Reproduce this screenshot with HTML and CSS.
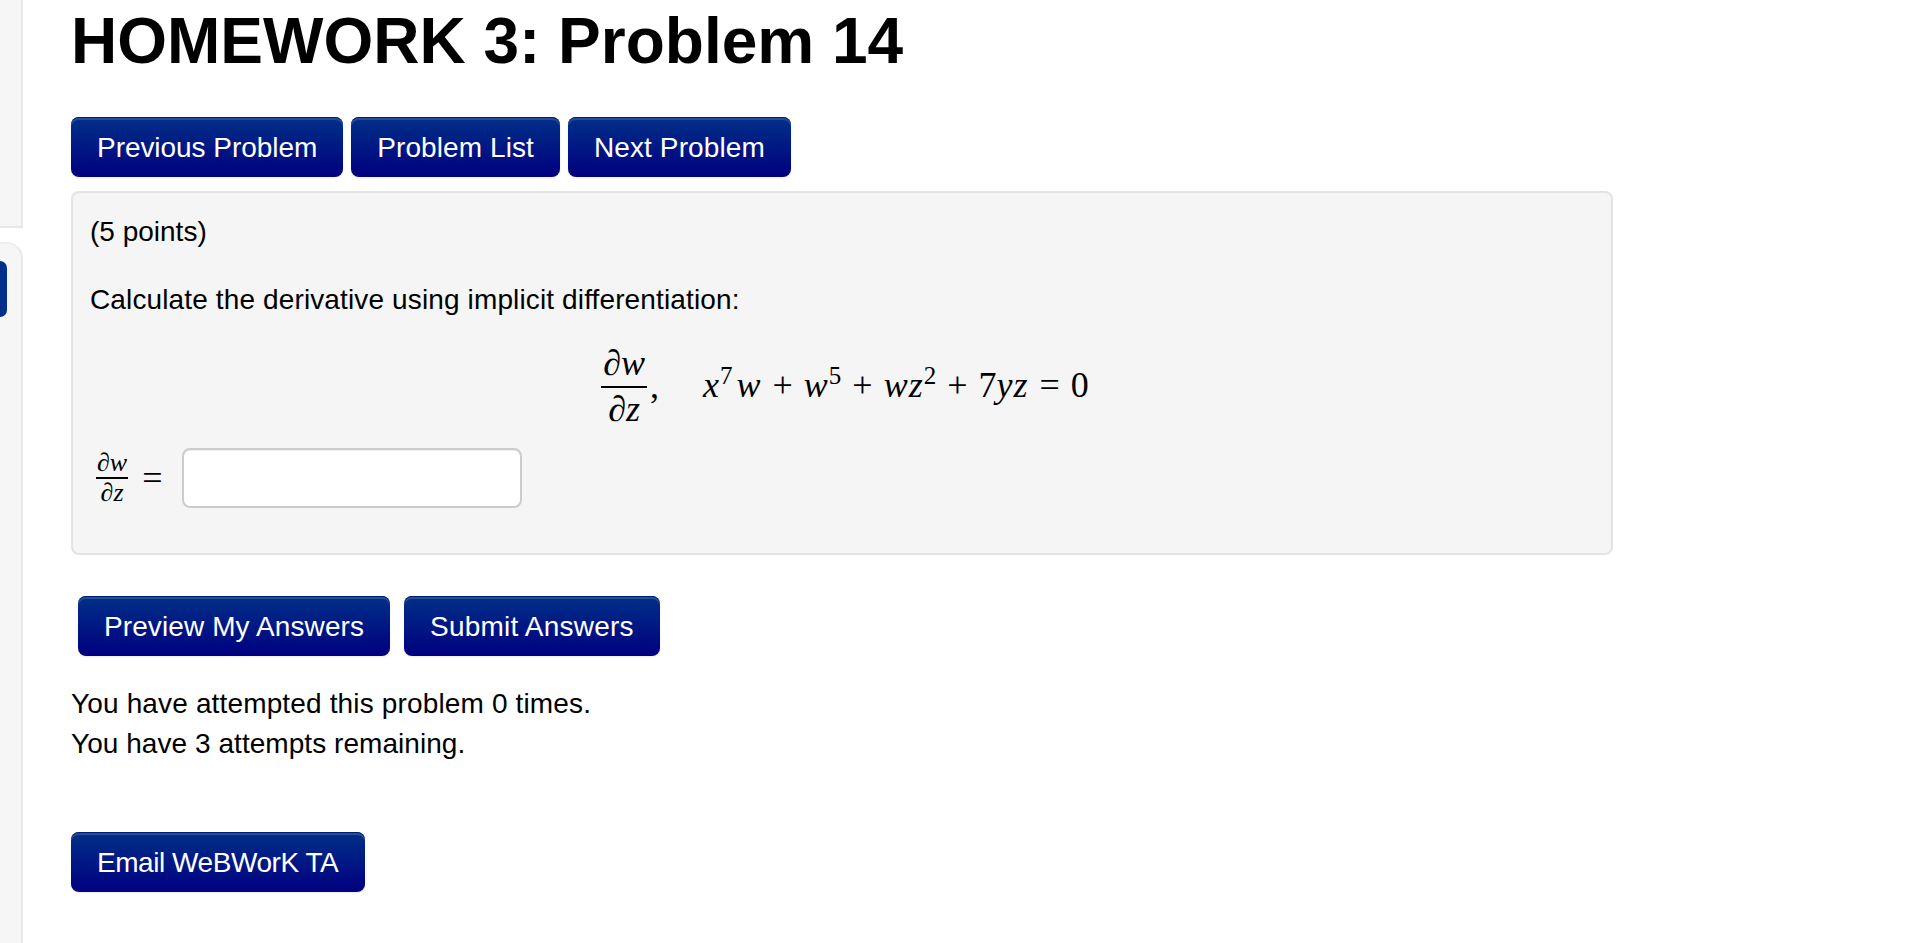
FILE: index.html
```html
<!DOCTYPE html>
<html lang="en">
  <head>
    <meta charset="UTF-8" />
    <title>HOMEWORK 3: Problem 14</title>
    <link rel="stylesheet" href="styles.css">
  </head>
  <body>
    <aside class="sidebar">
      <div class="side-box"></div>
      <div class="side-menu">
        <div class="side-tab"></div>
      </div>
    </aside>
    <main class="content">
      <h1>HOMEWORK 3: Problem 14</h1>
      <div class="nav-buttons">
        <a class="btn btn-prev" href="#">Previous Problem</a>
        <a class="btn" href="#">Problem List</a>
        <a class="btn" href="#">Next Problem</a>
      </div>
      <div class="well">
        <p class="points">(5 points)</p>
        <p class="question">Calculate the derivative using implicit differentiation:</p>
        <div class="math-display">
          <span class="frac">
            <span class="frac-num">∂w</span>
            <span class="frac-den">∂z</span>
          </span>
          <span class="comma">,</span>
          <span class="equation"><i>x</i><sup>7</sup><i class="after-sup">w</i><span class="op">+</span><i>w</i><sup>5</sup><span class="op">+</span><i>wz</i><sup class="tight">2</sup><span class="op">+</span>7<i>yz</i><span class="op">=</span>0</span>
        </div>
        <div class="answer-row">
          <span class="frac frac-small">
            <span class="frac-num">∂w</span>
            <span class="frac-den">∂z</span>
          </span>
          <span class="equals">=</span>
          <input class="answer" type="text">
        </div>
      </div>
      <div class="submit-buttons">
        <button class="btn">Preview My Answers</button>
        <button class="btn btn-submit">Submit Answers</button>
      </div>
      <div class="attempts">
        <div>You have attempted this problem 0 times.</div>
        <div class="attempts-left">You have 3 attempts remaining.</div>
      </div>
      <a class="btn btn-email" href="#">Email WeBWorK TA</a>
    </main>
  </body>
</html>
```

FILE: styles.css
```css
body {
  margin: 0;
  display: flex;
  min-height: 100vh;
  background: #fff;
  color: #000;
  font-family: "Liberation Sans", Arial, sans-serif;
  font-size: 28px;
  line-height: 40px;
  overflow: hidden;
}

.sidebar {
  width: 23px;
  display: flex;
  flex-direction: column;
  gap: 14px;
}

.side-box {
  height: 226px;
  background: #f6f6f6;
  border-right: 2px solid #e8e8e8;
  border-bottom: 2px solid #e8e8e8;
}

.side-menu {
  flex: 1;
  padding-top: 17px;
  background: #f6f6f6;
  border-top: 2px solid #eee;
  border-right: 2px solid #e8e8e8;
  border-top-right-radius: 16px;
}

.side-tab {
  width: 7px;
  height: 56px;
  background: #003087;
  border-radius: 0 10px 10px 0;
}

.content {
  padding-left: 48px;
  width: 1542px;
}

h1 {
  margin: 0 0 35px;
  font-size: 64px;
  line-height: 82px;
  font-weight: bold;
}

.btn {
  display: inline-block;
  box-sizing: border-box;
  height: 60px;
  padding: 2px 26px 0;
  font-family: inherit;
  font-size: 28px;
  line-height: 58px;
  letter-spacing: 0.1px;
  color: #fff;
  text-decoration: none;
  background: linear-gradient(#003087, #000080);
  border: 0;
  border-radius: 8px;
  box-shadow: inset 0 1px 0 #00206f, inset 0 3px 0 rgba(255, 255, 255, 0.15), 0 1px 2px rgba(0, 0, 0, 0.08);
}

.btn-prev {
  letter-spacing: -0.05px;
}

.btn-submit {
  letter-spacing: 0.2px;
}

.nav-buttons {
  display: flex;
  gap: 8px;
  margin-bottom: 14px;
}

.well {
  box-sizing: border-box;
  height: 364px;
  padding: 19px 17px;
  background: #f5f5f5;
  border: 2px solid #e3e3e3;
  border-radius: 8px;
}

.points {
  margin: 0 0 27px;
}

.question {
  margin: 0 0 23px;
  padding-top: 1px;
  letter-spacing: 0.13px;
}

.math-display {
  display: flex;
  justify-content: center;
  align-items: center;
  padding-left: 6px;
  font-family: "Liberation Serif", "Times New Roman", serif;
  font-size: 36px;
}

.frac {
  display: inline-flex;
  flex-direction: column;
  align-items: center;
  font-style: italic;
}

.frac-num {
  padding: 0 2px 3px;
  border-bottom: 2px solid #000;
}

.frac-den {
  padding-top: 1px;
}

.comma {
  margin: 0 44px 0 3px;
}

.equation {
  margin-bottom: 2px;
}

.equation i {
  letter-spacing: 1px;
}

.equation sup {
  font-size: 25px;
  line-height: 0;
}

.after-sup {
  margin-left: 4px;
}

.op {
  margin: 0 11px;
}

.answer-row {
  display: flex;
  align-items: center;
  margin-top: 19px;
  font-family: "Liberation Serif", "Times New Roman", serif;
}

.frac-small {
  font-size: 26px;
  line-height: 28px;
  margin-left: 6px;
}

.frac-small .frac-num {
  padding: 0 1px 0;
}

.frac-small .frac-den {
  padding-top: 0;
}

.equals {
  margin: 0 19px 0 14px;
  font-size: 36px;
}

.answer {
  box-sizing: border-box;
  width: 340px;
  height: 60px;
  padding: 0 12px;
  background: #fff;
  border: 2px solid #ccc;
  border-radius: 8px;
  box-shadow: inset 0 1px 1px rgba(0, 0, 0, 0.075);
}

.submit-buttons {
  display: flex;
  gap: 14px;
  margin: 41px 0 0 7px;
}

.attempts {
  margin-top: 28px;
  letter-spacing: 0.15px;
}

.attempts-left {
  letter-spacing: 0.05px;
}

.btn-email {
  margin-top: 68px;
  padding-right: 27px;
  letter-spacing: -0.45px;
}
```
